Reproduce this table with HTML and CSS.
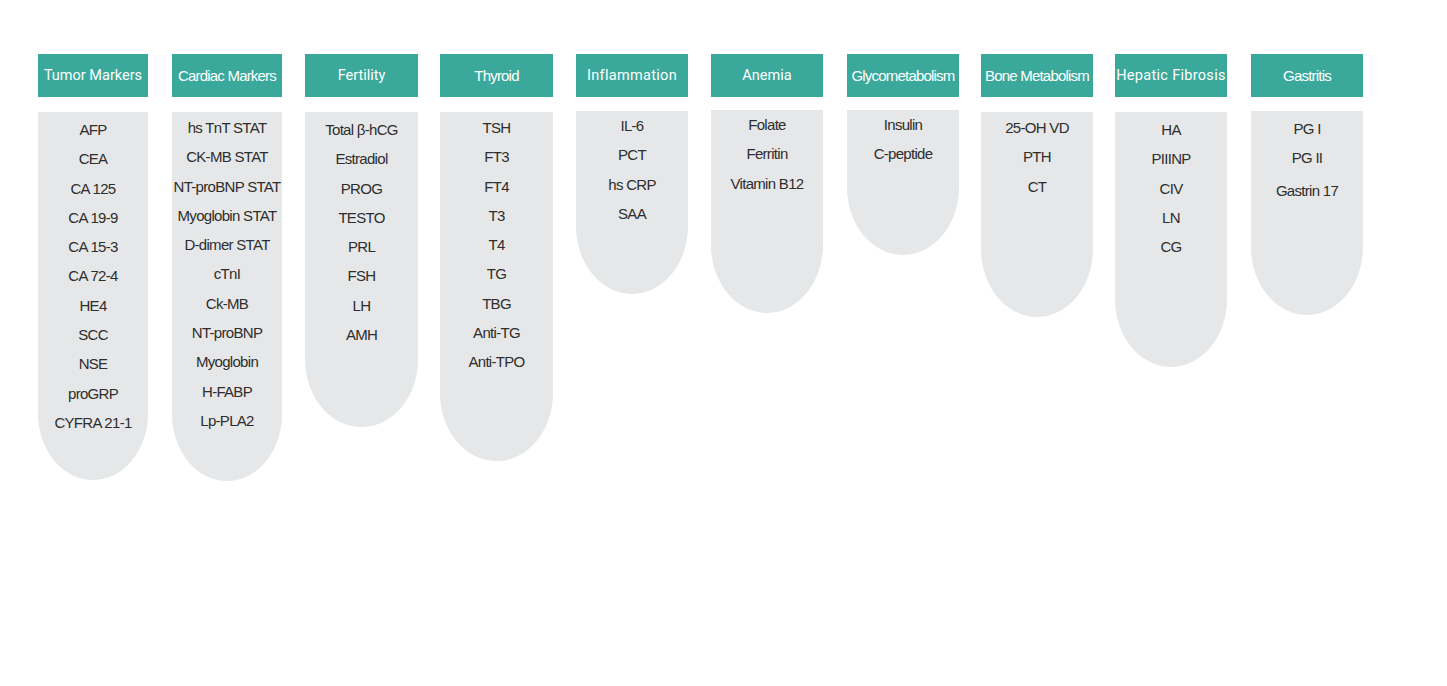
FILE: index.html
```html
<!DOCTYPE html>
<html lang="en">
<head>
<meta charset="utf-8">
<title>Test Menu</title>
<link rel="stylesheet" href="styles.css">
</head>
<body>
<main class="panel">
  <section class="col col--s">
    <h2 class="head">Tumor Markers</h2>
    <ul class="tube tube--tumor">
      <li>AFP</li><li>CEA</li><li>CA 125</li><li>CA 19-9</li><li>CA 15-3</li><li>CA 72-4</li><li>HE4</li><li>SCC</li><li>NSE</li><li>proGRP</li><li>CYFRA 21-1</li>
    </ul>
  </section>
  <section class="col col--s">
    <h2 class="head head--narrow">Cardiac Markers</h2>
    <ul class="tube tube--cardiac">
      <li>hs TnT STAT</li><li>CK-MB STAT</li><li>NT-proBNP STAT</li><li>Myoglobin STAT</li><li>D-dimer STAT</li><li>cTnI</li><li>Ck-MB</li><li>NT-proBNP</li><li>Myoglobin</li><li>H-FABP</li><li>Lp-PLA2</li>
    </ul>
  </section>
  <section class="col col--l">
    <h2 class="head">Fertility</h2>
    <ul class="tube tube--fertility">
      <li>Total β-hCG</li><li>Estradiol</li><li>PROG</li><li>TESTO</li><li>PRL</li><li>FSH</li><li>LH</li><li>AMH</li>
    </ul>
  </section>
  <section class="col col--l">
    <h2 class="head head--narrow">Thyroid</h2>
    <ul class="tube tube--thyroid">
      <li>TSH</li><li>FT3</li><li>FT4</li><li>T3</li><li>T4</li><li>TG</li><li>TBG</li><li>Anti-TG</li><li>Anti-TPO</li>
    </ul>
  </section>
  <section class="col">
    <h2 class="head head--wide">Inflammation</h2>
    <ul class="tube tube--inflammation">
      <li>IL-6</li><li>PCT</li><li>hs CRP</li><li>SAA</li>
    </ul>
  </section>
  <section class="col">
    <h2 class="head">Anemia</h2>
    <ul class="tube tube--anemia">
      <li>Folate</li><li>Ferritin</li><li>Vitamin B12</li>
    </ul>
  </section>
  <section class="col">
    <h2 class="head head--narrow">Glycometabolism</h2>
    <ul class="tube tube--glyco">
      <li>Insulin</li><li>C-peptide</li>
    </ul>
  </section>
  <section class="col">
    <h2 class="head head--narrow">Bone Metabolism</h2>
    <ul class="tube tube--bone">
      <li>25-OH VD</li><li>PTH</li><li>CT</li>
    </ul>
  </section>
  <section class="col">
    <h2 class="head head--wide">Hepatic Fibrosis</h2>
    <ul class="tube tube--hepatic">
      <li>HA</li><li>PIIINP</li><li>CIV</li><li>LN</li><li>CG</li>
    </ul>
  </section>
  <section class="col">
    <h2 class="head head--narrow">Gastritis</h2>
    <ul class="tube tube--gastritis">
      <li>PG I</li><li>PG II</li><li class="tube__gap">Gastrin 17</li>
    </ul>
  </section>
</main>
</body>
</html>
```
FILE: styles.css
```css
* {
  box-sizing: border-box;
}

html, body {
  margin: 0;
  padding: 0;
  background: #ffffff;
}

body {
  width: 1447px;
  height: 686px;
  overflow: hidden;
  font-family: "Liberation Sans", Arial, sans-serif;
}

.panel {
  display: grid;
  grid-template-columns: 134px 133px 135px 136px 135px 136px 134px 134px 136px 112px;
  align-items: start;
  padding: 54px 0 0 38px;
}

.col {
  width: 112px;
  display: flex;
  flex-direction: column;
}

.col--s {
  width: 110px;
}

.col--l {
  width: 113px;
}

.head {
  margin: 0;
  height: 43px;
  display: flex;
  align-items: center;
  justify-content: center;
  background: #3aa89b;
  color: #ffffff;
  font-family: Roboto, "Liberation Sans", sans-serif;
  font-weight: 400;
  font-size: 14.5px;
  letter-spacing: 0;
  white-space: nowrap;
}

.head--narrow {
  font-family: "Liberation Sans", Arial, sans-serif;
  font-size: 15px;
  letter-spacing: -0.8px;
}

.head--wide {
  letter-spacing: 0.3px;
}

.tube {
  list-style: none;
  margin: 15px 0 0;
  padding: 2px 0 0;
  background: #e6e7e8;
  border-radius: 0 0 56px 56px / 0 0 68px 68px;
  color: #2e2e2e;
  font-size: 15px;
  letter-spacing: -0.7px;
  line-height: 29.3px;
  text-align: center;
  white-space: nowrap;
}

.tube--tumor { height: 368px; padding-top: 3px; }
.tube--cardiac { height: 369px; padding-top: 1px; }
.tube--fertility { height: 315px; padding-top: 3px; }
.tube--thyroid { height: 349px; padding-top: 1px; }
.tube--inflammation { height: 183px; padding-top: 0; margin-top: 14px; }
.tube--anemia { height: 203px; padding-top: 0; margin-top: 13px; }
.tube--glyco { height: 145px; padding-top: 0; margin-top: 13px; }
.tube--bone { height: 205px; padding-top: 1px; }
.tube--hepatic { height: 255px; padding-top: 3px; }
.tube--gastritis { height: 204px; padding-top: 3px; margin-top: 14px; }

.tube__gap {
  margin-top: 3px;
}
```
